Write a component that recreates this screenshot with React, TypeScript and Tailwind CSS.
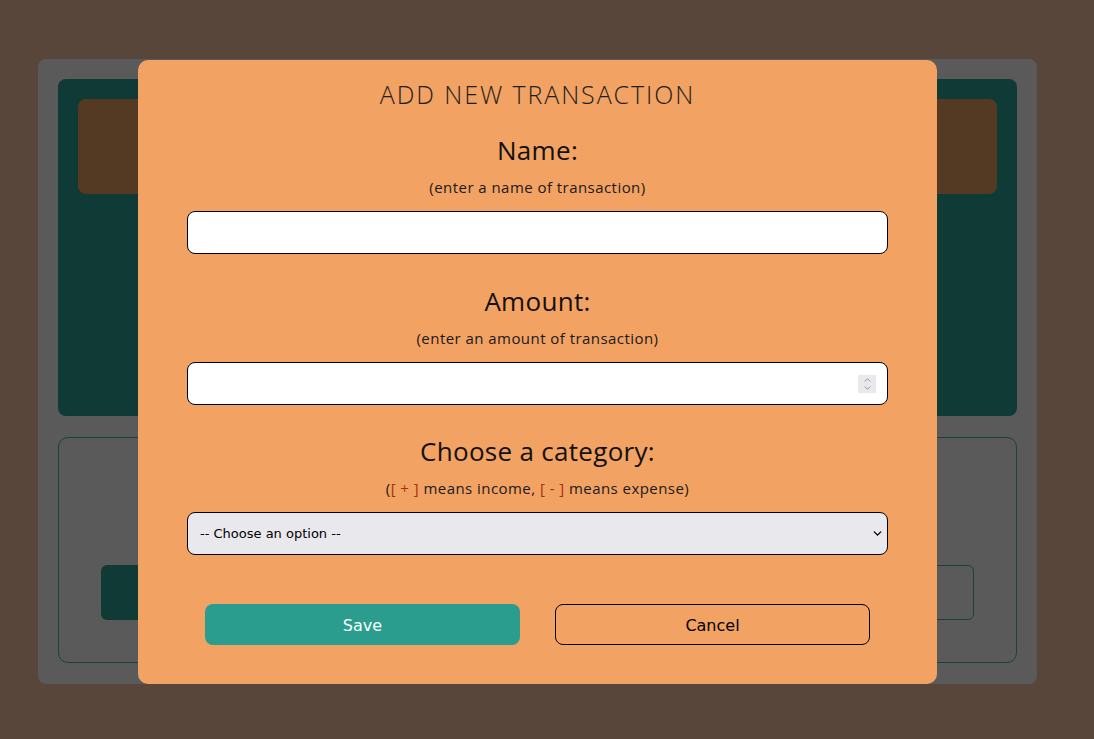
import React from 'react'
import { ChevronDown, ChevronUp } from 'lucide-react'

const Field = ({ label, hint, children }: { label: string; hint: React.ReactNode; children: React.ReactNode }) => (
    <div className="flex flex-col items-center">
        <h3 className="text-[26px] leading-8 tracking-[0.3px] text-[#111]">{label}</h3>
        <p className="mt-[11px] text-[15px] leading-5 tracking-[0.45px] text-[#1a1a1a]">{hint}</p>
        <div className="mt-[14px] w-full">{children}</div>
    </div>
)

const App = () => {
    return (
        <div className="min-h-screen bg-[#574639] pt-[59px] pl-[38px] relative font-['Open_Sans',sans-serif]">
            {/* page behind the dialog, dimmed */}
            <div className="w-[999px] h-[625px] bg-[#5a5a5a] rounded-lg p-5 flex flex-col gap-[21px]">
                <div className="h-[337px] bg-[#0f3a36] rounded-lg p-5">
                    <div className="h-[95px] bg-[#543a23] rounded-lg" />
                </div>
                <div className="h-[226px] border border-[#17443d] rounded-[10px] px-[42px] pb-[42px] flex flex-row items-end justify-between">
                    <div className="w-[300px] h-[55px] bg-[#0f3a36] rounded-md" />
                    <div className="w-[300px] h-[55px] border border-[#17443d] rounded-md" />
                </div>
            </div>

            {/* modal */}
            <div className="absolute left-[138px] top-[60px] w-[799px] h-[624px] bg-[#f2a262] rounded-[10px] px-[49px] pt-[18px]">
                <h2 className="text-center text-[25px] leading-8 font-light tracking-[1.9px] text-[#1e1e1e]">
                    ADD NEW TRANSACTION
                </h2>

                <div className="mt-[24px]">
                    <Field label="Name:" hint="(enter a name of transaction)">
                        <input
                            type="text"
                            className="w-full h-[43px] bg-white border border-black rounded-lg px-3 focus:outline-none"
                        />
                    </Field>
                </div>

                <div className="mt-[31px]">
                    <Field label="Amount:" hint="(enter an amount of transaction)">
                        <div className="relative">
                            <input
                                type="text"
                                className="w-full h-[43px] bg-white border border-black rounded-lg px-3 focus:outline-none"
                            />
                            <div className="absolute right-[12px] top-[13px] w-[18px] h-[18px] bg-[#e9e8ed] flex flex-col items-center justify-center text-[#8a8a93]">
                                <ChevronUp size={11} strokeWidth={2.2} className="-mb-[2px]" />
                                <ChevronDown size={11} strokeWidth={2.2} />
                            </div>
                        </div>
                    </Field>
                </div>

                <div className="mt-[30px]">
                    <Field
                        label="Choose a category:"
                        hint={
                            <>
                                (<span className="text-[#a8300c]">[ + ]</span> means income,{' '}
                                <span className="text-[#a8300c]">[ - ]</span> means expense)
                            </>
                        }
                    >
                        <div className="relative">
                            <select className="w-full h-[43px] appearance-none bg-[#e9e8ed] border border-black rounded-lg pl-3 pr-8 text-[13px] text-black font-['DejaVu_Sans',sans-serif] focus:outline-none">
                                <option>-- Choose an option --</option>
                            </select>
                            <ChevronDown size={13} strokeWidth={2.5} className="absolute right-[4px] top-[15px] text-black pointer-events-none" />
                        </div>
                    </Field>
                </div>

                <div className="mt-[49px] px-[18px] flex flex-row justify-between">
                    <button className="w-[315px] h-[41px] bg-[#2a9d8f] rounded-lg pt-[3px] text-white text-[16px] font-['DejaVu_Sans',sans-serif]">
                        Save
                    </button>
                    <button className="w-[315px] h-[41px] border border-black rounded-lg pt-[3px] text-black text-[16px] font-['DejaVu_Sans',sans-serif]">
                        Cancel
                    </button>
                </div>
            </div>
        </div>
    )
}

export default App
